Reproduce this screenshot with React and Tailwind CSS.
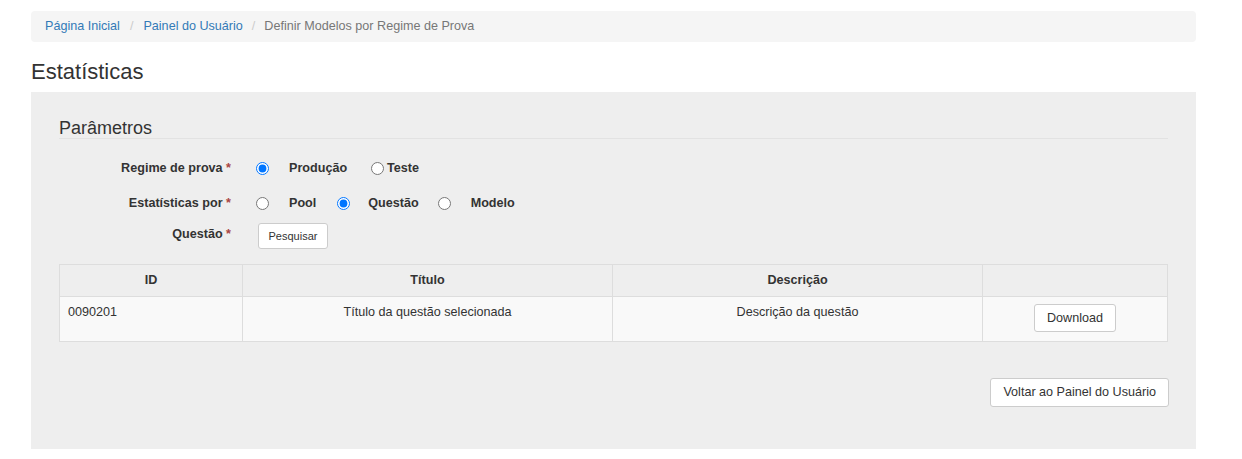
function Radio({ checked, className = "" }) {
  return (
    <input
      type="radio"
      defaultChecked={checked}
      className={"m-0 w-[13px] h-[13px] shrink-0 " + className}
    />
  );
}

function Label({ text }) {
  return (
    <label className="w-[172px] shrink-0 text-right font-bold">
      {text} <span className="text-[#a94442]">*</span>
    </label>
  );
}

export default function App() {
  return (
    <div className="min-h-[459px] bg-white font-['Liberation_Sans',Arial,sans-serif] text-[12.6px] text-[#333]">
      <div className="ml-[31px] w-[1165px] pt-[11px]">
        <ol className="flex items-center h-[31px] pb-[1px] px-[14px] bg-[#f5f5f5] rounded-[4px]">
          <li>
            <a className="text-[#337ab7]">Página Inicial</a>
          </li>
          <li className="px-[10px] text-[#ccc]">/</li>
          <li>
            <a className="text-[#337ab7]">Painel do Usuário</a>
          </li>
          <li className="px-[9px] text-[#ccc]">/</li>
          <li className="text-[#777]">Definir Modelos por Regime de Prova</li>
        </ol>

        <h1 className="mt-[18px] mb-[8px] text-[22px] leading-[24px] font-normal">
          Estatísticas
        </h1>

        <div className="bg-[#eeeeee] px-[28px] pt-[26px] pb-[42px]">
          <div className="text-[18px] leading-[20px] border-b border-[#e2e2e2]">
            Parâmetros
          </div>

          <div className="flex items-center h-[20px] mt-[19px]">
            <Label text="Regime de prova" />
            <Radio checked className="ml-[25px]" />
            <span className="ml-[20px] font-bold">Produção</span>
            <Radio className="ml-[24px]" />
            <span className="ml-[3px] font-bold">Teste</span>
          </div>

          <div className="flex items-center h-[20px] mt-[15px]">
            <Label text="Estatísticas por" />
            <Radio className="ml-[25px]" />
            <span className="ml-[20px] font-bold">Pool</span>
            <Radio checked className="ml-[21px]" />
            <span className="ml-[18px] font-bold">Questão</span>
            <Radio className="ml-[19px]" />
            <span className="ml-[20px] font-bold">Modelo</span>
          </div>

          <div className="flex items-center h-[26px] mt-[10px]">
            <label className="w-[172px] shrink-0 text-right font-bold -mt-[3px]">
              Questão <span className="text-[#a94442]">*</span>
            </label>
            <button className="ml-[27px] h-[26px] w-[70px] bg-white border border-[#ccc] rounded-[3px] text-[11px] text-[#333]">
              Pesquisar
            </button>
          </div>

          <table className="mt-[15px] w-[1109px] border-collapse border border-[#ddd] table-fixed">
            <thead>
              <tr className="h-[32px] bg-[#eeeeee]">
                <th className="w-[183px] border border-[#ddd] font-bold">ID</th>
                <th className="w-[370px] border border-[#ddd] font-bold">Título</th>
                <th className="w-[370px] border border-[#ddd] font-bold">Descrição</th>
                <th className="border border-[#ddd]"></th>
              </tr>
            </thead>
            <tbody>
              <tr className="h-[45px] bg-[#f9f9f9] align-top">
                <td className="border border-[#ddd] px-[8px] pt-[6px]">0090201</td>
                <td className="border border-[#ddd] px-[8px] pt-[6px] text-center">
                  Título da questão selecionada
                </td>
                <td className="border border-[#ddd] px-[8px] pt-[6px] text-center">
                  Descrição da questão
                </td>
                <td className="border border-[#ddd] px-[8px] pt-[7px] text-center">
                  <button className="h-[28px] px-[12px] bg-white border border-[#ccc] rounded-[3px] text-[#333]">
                    Download
                  </button>
                </td>
              </tr>
            </tbody>
          </table>

          <div className="flex justify-end w-[1110px] mt-[36px]">
            <button className="h-[29px] px-[12px] bg-white border border-[#ccc] rounded-[3px] text-[#333]">
              Voltar ao Painel do Usuário
            </button>
          </div>
        </div>
      </div>
    </div>
  );
}
